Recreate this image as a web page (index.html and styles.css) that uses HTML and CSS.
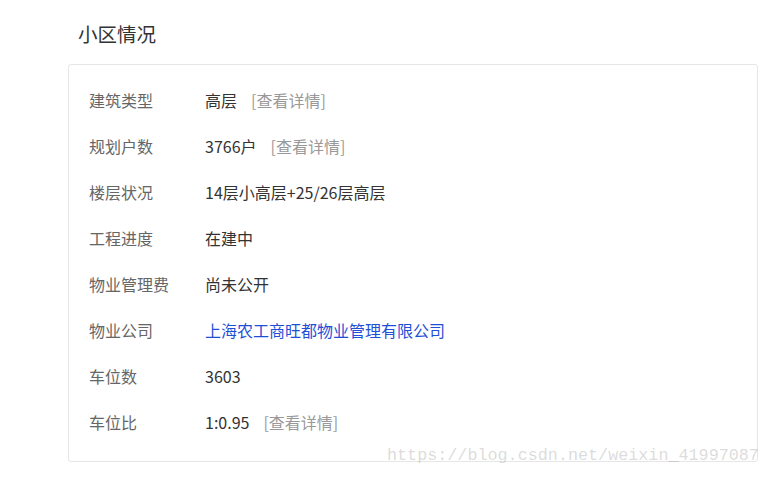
FILE: index.html
```html
<!DOCTYPE html>
<html lang="zh-CN">
<head>
<meta charset="utf-8">
<title>小区情况</title>
<link rel="stylesheet" href="styles.css">
</head>
<body>
<div class="page">
  <h2 class="title">小区情况</h2>
  <div class="card">
    <div class="row"><span class="label">建筑类型</span><span class="value">高层</span><a class="more">[查看详情]</a></div>
    <div class="row"><span class="label">规划户数</span><span class="value">3766户</span><a class="more">[查看详情]</a></div>
    <div class="row"><span class="label">楼层状况</span><span class="value">14层小高层+25/26层高层</span></div>
    <div class="row"><span class="label">工程进度</span><span class="value">在建中</span></div>
    <div class="row"><span class="label">物业管理费</span><span class="value">尚未公开</span></div>
    <div class="row"><span class="label">物业公司</span><a class="value link">上海农工商旺都物业管理有限公司</a></div>
    <div class="row"><span class="label">车位数</span><span class="value">3603</span></div>
    <div class="row"><span class="label">车位比</span><span class="value">1:0.95</span><a class="more">[查看详情]</a></div>
  </div>
  <div class="watermark">https://blog.csdn.net/weixin_41997087</div>
</div>
</body>
</html>
```
FILE: styles.css
```css
html, body {
  margin: 0;
  padding: 0;
  background: #fff;
}
.page {
  position: relative;
  width: 768px;
  height: 477px;
  font-family: "Microsoft YaHei", "Noto Sans CJK SC", "Noto Sans", sans-serif;
}
.title {
  margin: 0;
  padding: 20px 0 0 78px;
  height: 64px;
  box-sizing: border-box;
  font-size: 19.5px;
  font-weight: normal;
  line-height: 28px;
  color: #333;
}
.card {
  margin-left: 68px;
  width: 690px;
  height: 398px;
  box-sizing: border-box;
  border: 1px solid #e6e6e6;
  border-radius: 3px;
  padding: 12px 0 0 20px;
}
.row {
  display: flex;
  align-items: center;
  height: 46px;
  font-size: 16px;
  line-height: 46px;
}
.label {
  width: 116px;
  color: #666;
}
.value {
  color: #333;
}
.link {
  color: #1f4fd6;
  text-decoration: none;
}
.more {
  margin-left: 14px;
  color: #999;
}
.watermark {
  position: absolute;
  left: 387px;
  top: 446px;
  font-family: "Liberation Mono", monospace;
  font-size: 16.75px;
  line-height: 20px;
  color: rgba(160, 160, 160, 0.38);
}
```
